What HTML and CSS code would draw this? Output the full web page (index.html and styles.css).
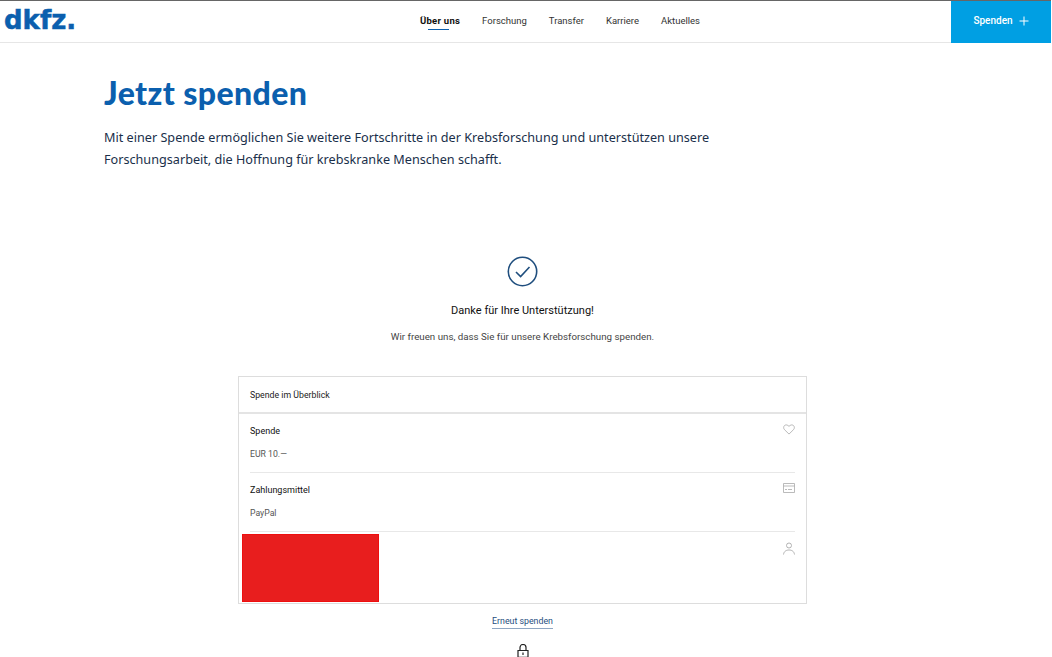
FILE: index.html
```html
<!DOCTYPE html>
<html lang="de">
<head>
    <meta charset="UTF-8">
    <meta name="viewport" content="width=device-width, initial-scale=1.0">
    <title>Jetzt spenden</title>
    <link rel="stylesheet" href="styles.css">
</head>
<body>
    <header class="topbar">
        <a class="logo" href="#">dkfz.</a>
        <nav class="mainnav">
            <a class="active" href="#">Über uns</a>
            <a href="#">Forschung</a>
            <a href="#">Transfer</a>
            <a href="#">Karriere</a>
            <a href="#">Aktuelles</a>
        </nav>
        <a class="donate" href="#">Spenden
            <svg width="10" height="10" viewBox="0 0 10 10"><path d="M5 0.500v9M0.500 5h9" stroke="#fff" stroke-width="1" fill="none"/></svg>
        </a>
    </header>

    <section class="intro">
        <h1>Jetzt spenden</h1>
        <p>Mit einer Spende ermöglichen Sie weitere Fortschritte in der Krebsforschung und unterstützen unsere Forschungsarbeit, die Hoffnung für krebskranke Menschen schafft.</p>
    </section>

    <main class="content">
        <section class="thanks">
            <svg class="check" width="31" height="31" viewBox="0 0 31 31">
                <circle cx="15.500" cy="15.500" r="14.200" stroke="#1f4e7e" stroke-width="1.600" fill="none"/>
                <path d="M9 16l4.600 4.600L22.500 11" stroke="#1f4e7e" stroke-width="1.600" fill="none"/>
            </svg>
            <h2>Danke für Ihre Unterstützung!</h2>
            <p>Wir freuen uns, dass Sie für unsere Krebsforschung spenden.</p>
        </section>

        <section class="summary">
            <div class="summary-head">Spende im Überblick</div>
            <div class="summary-body">
                <div class="row">
                    <div>
                        <h3>Spende</h3>
                        <p>EUR 10.—</p>
                    </div>
                    <svg class="icon" width="12" height="11" viewBox="0 0 13 12">
                        <path d="M6.500 11L1.600 6.200C0.200 4.700 0.500 2.600 1.700 1.600 3 0.600 5 0.800 6.500 2.600 8 0.800 10 0.600 11.300 1.600 12.500 2.600 12.800 4.700 11.400 6.200Z" stroke="#aaa" stroke-width="0.900" fill="none"/>
                    </svg>
                </div>
                <div class="row">
                    <div>
                        <h3>Zahlungsmittel</h3>
                        <p>PayPal</p>
                    </div>
                    <svg class="icon" width="12" height="10" viewBox="0 0 12 10">
                        <path d="M0.500 0.500h11v9h-11zM0.500 3h11M2 6.500h2M5 6.500h4" stroke="#aaa" stroke-width="0.800" fill="none"/>
                    </svg>
                </div>
                <div class="row row-last">
                    <div class="redacted"></div>
                    <svg class="icon" width="12" height="13" viewBox="0 0 12 13">
                        <circle cx="6" cy="3.500" r="2.500" stroke="#aaa" stroke-width="0.900" fill="none"/>
                        <path d="M0.500 12.500C1 9 3.500 8 6 8s5 1 5.500 4.500" stroke="#aaa" stroke-width="0.900" fill="none"/>
                    </svg>
                </div>
            </div>
        </section>

        <div class="again"><a href="#">Erneut spenden</a></div>
        <div class="lock">
            <svg width="12" height="14" viewBox="0 0 12 14">
                <path d="M3 6.500V3.500a3 3 0 0 1 6 0V6.500M1 6.500h10v6.800H1zM6 8.500v2.500" stroke="#222" stroke-width="1.200" fill="none"/>
            </svg>
        </div>
    </main>
</body>
</html>
```

FILE: styles.css
```css
html, body {
    height: 657px;
    overflow: hidden;
}
body {
    margin: 0;
    font-family: Roboto, Arial, sans-serif;
    color: #222;
    background: #fff;
}
a {
    text-decoration: none;
    color: inherit;
}
.topbar {
    display: flex;
    height: 43px;
    box-sizing: border-box;
    border-top: 1px solid #666;
    border-bottom: 1px solid #e6e6e6;
    margin-right: 1px;
}
.logo {
    width: 420px;
    padding-left: 4px;
    box-sizing: border-box;
    font-family: "DejaVu Sans", sans-serif;
    font-weight: 700;
    font-size: 26px;
    line-height: 38px;
    -webkit-text-stroke: 0.500px #0b5fae;
    color: #0b5fae;
}
.mainnav {
    display: flex;
    gap: 22px;
    flex: 1;
    font-size: 9.500px;
    line-height: 40px;
    color: #333;
}
.mainnav a {
    position: relative;
}
.mainnav .active {
    font-weight: 700;
    letter-spacing: 0.250px;
    color: #111;
}
.mainnav .active::after {
    content: "";
    position: absolute;
    left: 8px;
    right: 11px;
    top: 28px;
    height: 1px;
    background: #0b5fae;
}
.donate {
    display: flex;
    align-items: center;
    justify-content: center;
    gap: 6px;
    width: 100px;
    margin-bottom: -1px;
    padding-bottom: 3px;
    box-sizing: border-box;
    background: #009fe3;
    color: #fff;
    font-size: 10px;
    font-weight: 500;
}
.intro {
    padding: 31px 0 0 104px;
    width: 630px;
}
.intro h1 {
    margin: 0;
    font-family: Lato, sans-serif;
    font-weight: 900;
    font-size: 32px;
    line-height: 38px;
    letter-spacing: 0.400px;
    color: #0b5fae;
}
.intro p {
    margin: 14px 0 0;
    font-family: "Noto Sans", sans-serif;
    font-weight: 400;
    font-size: 12.650px;
    line-height: 22px;
    color: #1a2f4a;
}
.content {
    width: 569px;
    margin-left: 238px;
}
.thanks {
    margin-top: 86px;
    text-align: center;
}
.check {
    display: block;
    margin: 0 auto;
}
.thanks h2 {
    margin: 17px 0 0;
    font-size: 11px;
    font-weight: 400;
    line-height: 14px;
    color: #111;
}
.thanks p {
    margin: 12px 0 0;
    font-size: 9.750px;
    line-height: 14px;
    color: #444;
}
.summary {
    height: 228px;
    box-sizing: border-box;
    margin-top: 32px;
    border: 1px solid #ddd;
}
.summary-head {
    height: 35px;
    padding-left: 11px;
    border-bottom: 2px solid #e4e4e4;
    font-size: 8.750px;
    line-height: 36px;
    color: #222;
}
.summary-body {
    padding: 0 11px;
}
.row {
    display: flex;
    justify-content: space-between;
    height: 58px;
    border-bottom: 1px solid #e8e8e8;
}
.row h3 {
    margin: 11px 0 0;
    font-size: 9px;
    font-weight: 400;
    line-height: 13px;
    color: #111;
}
.row p {
    margin: 10px 0 0;
    font-size: 8.700px;
    line-height: 13px;
    color: #555;
}
.row-last {
    border-bottom: 0;
    margin-left: -8px;
}
.icon {
    margin-top: 10px;
}
.redacted {
    width: 137px;
    height: 68px;
    margin-top: 2px;
    box-sizing: border-box;
    background: #e81e1e;
    border: 1px solid #ee0f0f;
}
.again {
    margin-top: 11px;
    text-align: center;
    font-size: 8.800px;
    line-height: 12px;
    color: #1f4e7e;
}
.again a {
    display: inline-block;
    padding-bottom: 1px;
    border-bottom: 1px solid #8fa6c2;
}
.lock {
    margin-top: 14px;
    text-align: center;
}
```
